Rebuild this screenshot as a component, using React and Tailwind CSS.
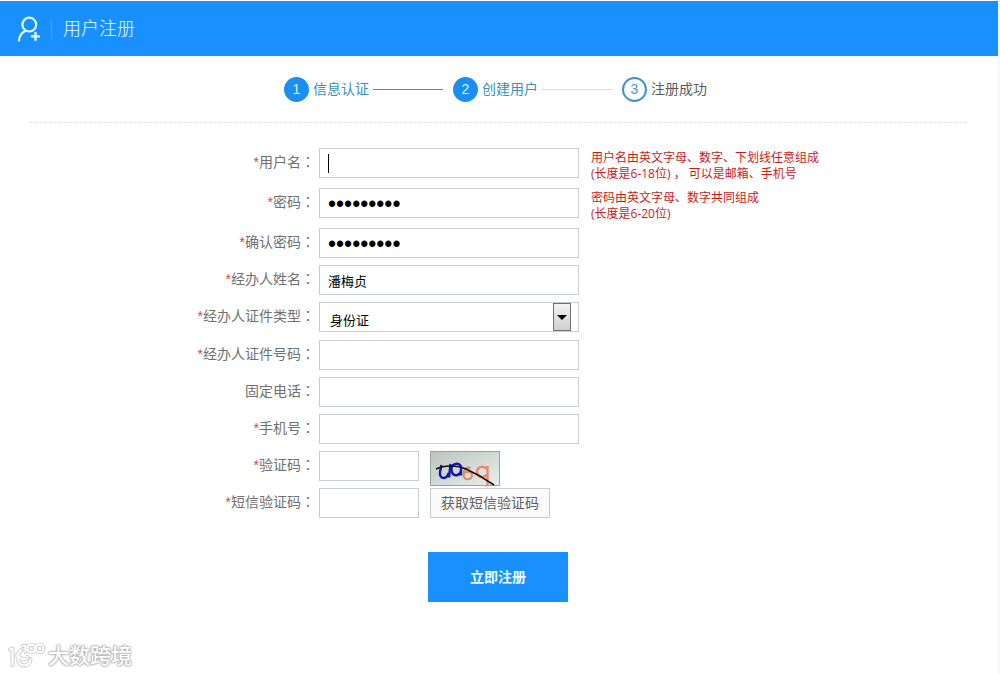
import React, { useState } from 'react';

const steps = [
  { no: 1, title: '信息认证', state: 'done' },
  { no: 2, title: '创建用户', state: 'active' },
  { no: 3, title: '注册成功', state: 'todo' }
];

const circleStyles = {
  done: 'border-[#1b8ef2] bg-[#1b8ef2] text-[#d8f4ff]',
  active: 'border-[#1b8ef2] bg-[#1b8ef2] text-[#d8f4ff]',
  todo: 'border-[#3f92cf] bg-white text-[#4f96bf]'
};

const inputClass = 'h-[30px] border border-[#c8cccc] bg-white px-2 text-black outline-none';
const passwordClass = "w-[260px] pt-[3px] font-['Liberation_Sans'] text-[23px]";

const UserIcon = () => (
  <svg width="24" height="26" viewBox="0 0 24 26" fill="none" stroke="#e2ffff" strokeWidth="2.2" strokeLinecap="round">
    <circle cx="12.3" cy="8.6" r="6.9" />
    <path d="M2 24.5C2.4 20 4.6 16.6 8.6 14.8" />
    <path d="M18.5 17V23.8M15.1 20.4H21.9" strokeWidth="2.4" />
  </svg>
);

const Captcha = () => (
  <svg width="70" height="35" viewBox="0 0 70 35" fill="none" role="img" aria-label="验证码图片">
    <defs>
      <linearGradient id="captcha-bg" x1="0" y1="0" x2="1" y2="1">
        <stop offset="0" stopColor="#bcc4c0" />
        <stop offset="1" stopColor="#e9efeb" />
      </linearGradient>
    </defs>
    <rect x="0.5" y="0.5" width="69" height="34" fill="url(#captcha-bg)" stroke="#8fa893" />
    <path d="M11.5 14L10 21C9 29 17 28.5 18.5 22M20.500 13L19 26.500" stroke="#1515b4" strokeWidth="2.4" />
    <path d="M21.500 18C21.500 12 30 11 31 16V24.500M21.500 18C21.500 26 29 26 31 20" stroke="#1515b4" strokeWidth="2.4" />
    <path d="M40.500 17C36 15.5 33 19 33.500 24.500" stroke="#e0876b" strokeWidth="2" />
    <ellipse cx="37.8" cy="24.5" rx="4.2" ry="3.8" stroke="#e0876b" strokeWidth="2" />
    <path d="M57 17.5C52 14 47 16 47 21S53 28 57 23.5M57.5 15V34" stroke="#e8896a" strokeWidth="2.4" />
    <path d="M6 18C14 14 27 14 36 18S54 27 64 34" stroke="#111" strokeWidth="1.6" />
  </svg>
);

const BrandLogo = () => (
  <svg width="38" height="28" viewBox="0 0 38 28" fill="none" strokeLinecap="round" strokeLinejoin="round">
    {[['#c8c8c8', 4], ['#ffffff', 2.2]].map(([color, width]) => (
      <g key={color} stroke={color} strokeWidth={width}>
        <path d="M2 7.5L4.500 6.5V23" />
        <path d="M13 8L9.500 13C9 19 12 23.5 16 23.5S22 20.5 22.500 17" />
        <path d="M9.500 13C13 18.500 18 18.500 19.500 15" />
        <path d="M15 4H17.5V10" />
        <circle cx="23.5" cy="6.5" r="3.8" />
        <circle cx="31.5" cy="6.5" r="3.8" />
      </g>
    ))}
  </svg>
);

const Steps = () => (
  <ol className="flex items-center justify-center pr-[7px] pt-[21px] text-[14px] leading-[25px]">
    {steps.map((step, i) => (
      <li key={step.no} className="flex items-center">
        <span
          className={`flex h-[25px] w-[25px] items-center justify-center rounded-full border-2 font-['Liberation_Sans'] ${circleStyles[step.state]}`}
        >
          {step.no}
        </span>
        <span className={step.state === 'todo' ? 'ml-1 text-[#5c5c5c]' : 'ml-1 text-[#3a90b8]'}>{step.title}</span>
        {i < steps.length - 1 && (
          <span className={`ml-1 mr-[10px] h-px w-[70px] ${step.state === 'done' ? 'bg-[#3f8fc4]' : 'bg-[#d8dcdc]'}`} />
        )}
      </li>
    ))}
  </ol>
);

const Row = ({ id, label, required = true, tall = false, hint, children }) => (
  <div className={`flex ${tall ? 'h-[33px]' : 'h-[30px]'}`}>
    <label htmlFor={id} className="mr-1 w-[286px] shrink-0 text-right text-[14px] leading-[26px] text-[#707070]">
      {required && <span className="text-[#e0452a]">*</span>}
      {label}
      <span className="font-['Noto_Sans_CJK_TC']">：</span>
    </label>
    {children}
    {hint && (
      <p className="ml-3 pt-[2px] font-['Open_Sans','Noto_Sans_CJK_SC',sans-serif] text-[12px] leading-[16px] text-[#cc1a1a]">
        {hint[0]}
        <br />
        {hint[1]}
      </p>
    )}
  </div>
);

const App = () => {
  const [form, setForm] = useState({
    username: '',
    password: 'abc123456',
    confirm: 'abc123456',
    name: '潘梅贞',
    idType: '身份证',
    idNo: '',
    tel: '',
    mobile: '',
    captcha: '',
    smsCode: ''
  });

  const field = (name) => ({
    id: name,
    name,
    value: form[name],
    onChange: (e) => setForm({ ...form, [name]: e.target.value })
  });

  return (
    <div className="flex min-h-screen flex-col border-r-2 border-[#f8f8f8] bg-white pt-px font-['Liberation_Sans','Noto_Sans_CJK_SC',sans-serif]">
      <header className="flex h-[55px] items-center bg-[#1890ff] pl-[17px]">
        <UserIcon />
        <h1 className="ml-[10px] border-l border-[#3fa5fb] pl-[11px] text-[18px] font-light leading-[20px] text-[#e6ffff]">
          用户注册
        </h1>
      </header>

      <Steps />

      <form className="ml-[29px] mr-[31px] mt-5 border-t border-dashed border-[#e3e3e3] pt-[25px]" onSubmit={(e) => e.preventDefault()}>
        <div className="flex flex-col gap-[7px]">
          <Row id="username" label="用户名" tall hint={['用户名由英文字母、数字、下划线任意组成', '(长度是6-18位) ， 可以是邮箱、手机号']}>
            <div className="relative h-[30px]">
              <input type="text" className={`${inputClass} w-[260px] text-[13px]`} {...field('username')} />
              <span className="absolute left-[9px] top-[6px] h-[19px] w-px bg-black" />
            </div>
          </Row>
          <Row id="password" label="密码" tall hint={['密码由英文字母、数字共同组成', '(长度是6-20位)']}>
            <input type="password" className={`${inputClass} ${passwordClass}`} {...field('password')} />
          </Row>
          <Row id="confirm" label="确认密码">
            <input type="password" className={`${inputClass} ${passwordClass}`} {...field('confirm')} />
          </Row>
          <Row id="name" label="经办人姓名">
            <input type="text" className={`${inputClass} w-[260px] text-[13px]`} {...field('name')} />
          </Row>
          <div className="pb-px">
            <Row id="idType" label="经办人证件类型">
              <div className="relative h-[30px]">
                <select className={`${inputClass} w-[260px] appearance-none pl-[10px] pt-2 text-[13px]`} {...field('idType')}>
                  <option>身份证</option>
                  <option>护照</option>
                </select>
                <span className="pointer-events-none absolute right-2 top-px flex h-7 w-[18px] items-center justify-center border border-[#707070] bg-linear-to-b from-[#f4f4f4] to-[#cfcfcf]">
                  <svg width="10" height="5" viewBox="0 0 10 5">
                    <path d="M0 0H10L5 5Z" fill="#000" />
                  </svg>
                </span>
              </div>
            </Row>
          </div>
          <Row id="idNo" label="经办人证件号码">
            <input type="text" className={`${inputClass} w-[260px] text-[13px]`} {...field('idNo')} />
          </Row>
          <Row id="tel" label="固定电话" required={false}>
            <input type="tel" className={`${inputClass} w-[260px] text-[13px]`} {...field('tel')} />
          </Row>
          <Row id="mobile" label="手机号">
            <input type="tel" className={`${inputClass} w-[260px] text-[13px]`} {...field('mobile')} />
          </Row>
          <Row id="captcha" label="验证码">
            <input type="text" className={`${inputClass} w-[100px] text-[13px]`} {...field('captcha')} />
            <span className="ml-[11px]">
              <Captcha />
            </span>
          </Row>
          <Row id="smsCode" label="短信验证码">
            <input type="text" className={`${inputClass} w-[100px] text-[13px]`} {...field('smsCode')} />
            <button type="button" className="ml-[11px] h-[30px] w-[120px] border border-[#c8cccc] bg-[#fafafa] text-[14px] text-[#606060]">
              获取短信验证码
            </button>
          </Row>
        </div>
        <button type="submit" className="mx-auto mt-[34px] block h-[50px] w-[140px] bg-[#1890ff] text-[14px] font-bold text-[#eaffff]">
          立即注册
        </button>
      </form>

      <footer className="mt-auto flex items-center pb-1 pl-2">
        <BrandLogo />
        <span className="ml-[2px] text-[21px] font-medium leading-[28px] text-white [text-shadow:0_0_1px_#aaa,0_0_2px_#aaa,0_0_2px_#aaa,0_0_3px_#bbb]">
          大数跨境
        </span>
      </footer>
    </div>
  );
};

export default App;
